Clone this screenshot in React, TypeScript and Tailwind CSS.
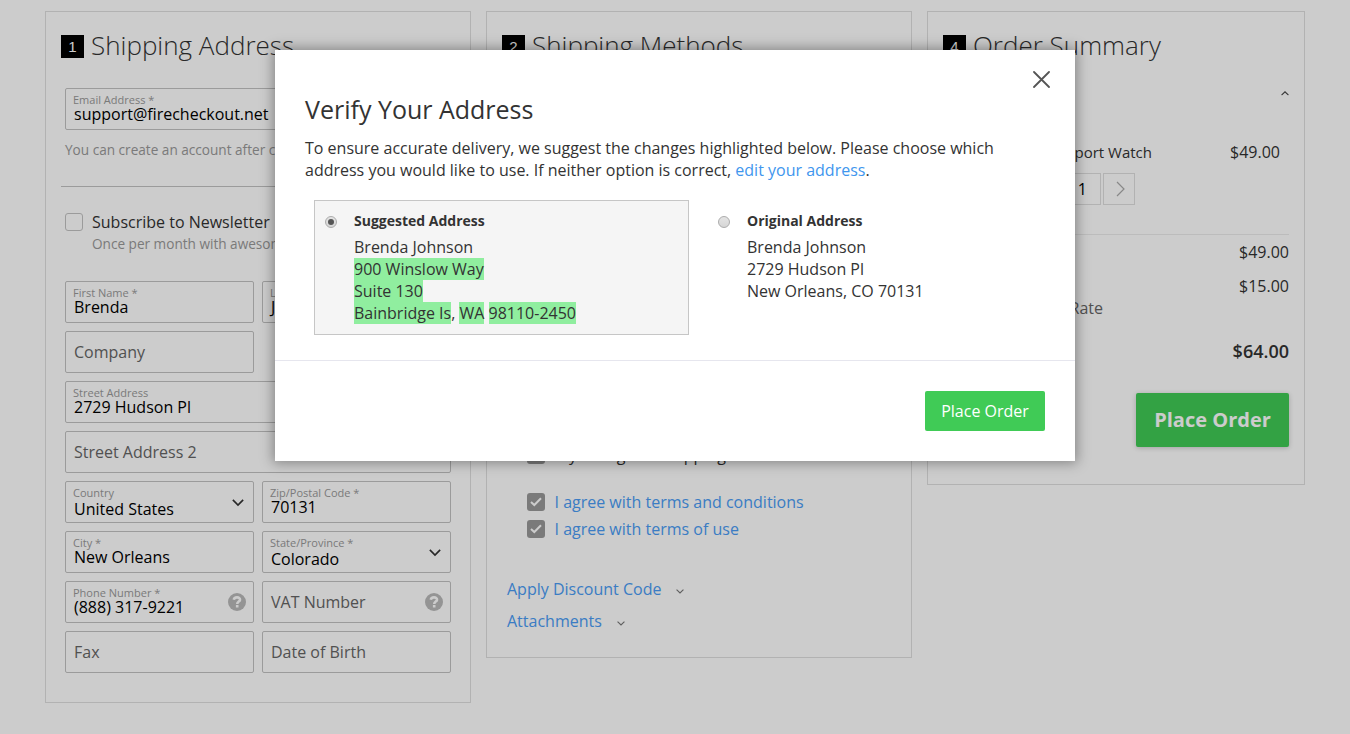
import React from "react";

function Badge({ n }: { n: string }) {
  return (
    <span className="flex h-[23px] w-[23px] items-center justify-center bg-black font-['Liberation_Sans'] text-[15px] leading-none text-white">
      {n}
    </span>
  );
}

function Title({ n, children }: { n: string; children: React.ReactNode }) {
  return (
    <div className="mb-px flex h-[36px] items-center gap-[7px] whitespace-nowrap">
      <Badge n={n} />
      <h2 className="-mt-[2px] text-[26px] leading-[36px] font-light text-[#333]">{children}</h2>
    </div>
  );
}

type DownProps = { w: number; stroke: string; weight?: number; className?: string };

function Down({ w, stroke, weight = 1.4, className = "" }: DownProps) {
  return (
    <svg width={w} height={w * 0.6} viewBox="0 0 10 6" fill="none" className={className}>
      <path d="M0.7 0.8 L5 5 L9.3 0.8" stroke={stroke} strokeWidth={weight} />
    </svg>
  );
}

function Help() {
  return (
    <svg width="18" height="18" viewBox="0 0 18 18" fill="none">
      <circle cx="9" cy="9" r="9" fill="#bababa" />
      <path d="M5.8 6.8 C6.3 3.4 12.2 3.8 12 6.8 C11.9 8.6 9.2 8.6 9.2 11" stroke="#fff" strokeWidth="2.6" />
      <rect x="7.9" y="12" width="2.6" height="2.5" fill="#fff" />
    </svg>
  );
}

type FieldProps = {
  label?: string;
  value?: string;
  placeholder?: string;
  select?: boolean;
  help?: boolean;
  wide?: boolean;
};

function Field({ label, value, placeholder, select, help, wide }: FieldProps) {
  return (
    <div
      className={`flex h-[42px] items-center justify-between rounded-[2px] border border-[#c2c2c2] pl-[8px] ${
        wide ? "col-span-2" : "w-[189px]"
      } ${select ? "pr-[9px]" : "pr-[7px]"}`}
    >
      {placeholder ? (
        <span className="text-[16px] leading-[22px] text-[#666]">{placeholder}</span>
      ) : (
        <span className="flex flex-col self-start pt-[5px]">
          <span className="-ml-px text-[11px] leading-[11px] text-[#999]">{label}</span>
          <span className={`text-[16px] leading-[18px] text-black ${select ? "pt-[2px]" : ""}`}>{value}</span>
        </span>
      )}
      {select && <Down w={12} stroke="#333" weight={1.4} className="mt-[2px]" />}
      {help && <Help />}
    </div>
  );
}

function Agree({ children }: { children: React.ReactNode }) {
  return (
    <div className="flex h-[27px] items-center gap-[9.5px]">
      <span className="flex h-[18px] w-[18px] items-center justify-center rounded-[3px] bg-[#999]">
        <svg width="12" height="10" viewBox="0 0 12 10" fill="none">
          <path d="M1 5 L4.3 8 L11 1.3" stroke="#fff" strokeWidth="2" />
        </svg>
      </span>
      {children}
    </div>
  );
}

function Radio({ on }: { on?: boolean }) {
  return (
    <span className="mt-[6px] flex h-[12px] w-[12px] shrink-0 items-center justify-center rounded-full border border-[#acacac] bg-linear-to-b from-[#e4e4e4] to-[#d6d6d6]">
      {on && <span className="h-[6px] w-[6px] rounded-full bg-[#555]" />}
    </span>
  );
}

function Mark({ children }: { children: React.ReactNode }) {
  return <span className="inline-block h-[22px] bg-[#90ee9f] leading-[22px]">{children}</span>;
}

function ShippingAddress() {
  return (
    <section className="h-[692px] w-[426px] shrink-0 border border-[#dfdfdf] px-[15px] pt-[16px]">
      <Title n="1">Shipping Address</Title>
      <div className="px-[4px] pt-[23px]">
        <Field label="Email Address *" value="support@firecheckout.net" wide />
        <p className="pt-[10px] text-[13.6px] leading-[20px] whitespace-nowrap text-[#999]">
          You can create an account after checkout.
        </p>
      </div>
      <hr className="mt-[26px] border-[#c2c2c2]" />
      <div className="flex gap-[9px] px-[4px] pt-[24px]">
        <span className="mt-[2px] h-[18px] w-[18px] rounded-[3px] border border-[#c2c2c2]" />
        <div>
          <p className="text-[16px] leading-[22px] text-[#333]">Subscribe to Newsletter</p>
          <p className="text-[13.6px] leading-[22px] text-[#999]">Once per month with awesome offers</p>
        </div>
      </div>
      <div className="grid grid-cols-[189px_189px] gap-[8px] px-[4px] pt-[26px]">
        <Field label="First Name *" value="Brenda" />
        <Field label="Last Name *" value="Johnson" />
        <Field placeholder="Company" />
        <span />
        <Field label="Street Address" value="2729 Hudson Pl" wide />
        <Field placeholder="Street Address 2" wide />
        <Field label="Country" value="United States" select />
        <Field label="Zip/Postal Code *" value="70131" />
        <Field label="City *" value="New Orleans" />
        <Field label="State/Province *" value="Colorado" select />
        <Field label="Phone Number *" value="(888) 317-9221" help />
        <Field placeholder="VAT Number" help />
        <Field placeholder="Fax" />
        <Field placeholder="Date of Birth" />
      </div>
    </section>
  );
}

function ShippingMethods() {
  return (
    <section className="flex h-[647px] w-[426px] shrink-0 flex-col border border-[#dfdfdf] px-[15px] pt-[16px]">
      <Title n="2">Shipping Methods</Title>
      <div className="mt-auto pb-[21px] text-[16px] leading-[22px] text-[#4a9cf5]">
        <div className="pl-[25px]">
          <Agree>
            <span className="text-[#333]">My billing and shipping</span>
          </Agree>
          <div className="pt-[20px]">
            <Agree>I agree with terms and conditions</Agree>
            <Agree>I agree with terms of use</Agree>
          </div>
        </div>
        <div className="flex items-center gap-[15px] pt-[36px] pl-[5px]">
          Apply Discount Code
          <Down w={8} stroke="#777" className="mt-[5px]" />
        </div>
        <div className="flex items-center gap-[15px] pt-[10px] pb-[4px] pl-[5px]">
          Attachments
          <Down w={8} stroke="#777" className="mt-[5px]" />
        </div>
      </div>
    </section>
  );
}

function OrderSummary() {
  return (
    <section className="h-[474px] w-[378px] shrink-0 border border-[#dfdfdf] px-[15px] pt-[16px] text-[16px] leading-[22px] text-[#333]">
      <Title n="4">Order Summary</Title>
      <div className="flex justify-end pt-[26px]">
        <Down w={8} stroke="#444" className="rotate-180" />
      </div>
      <div className="flex justify-between pt-[45px] pr-[9px]">
        <span className="w-[209px] text-right text-[15px] whitespace-nowrap">Sprite Sport Watch</span>
        <span>$49.00</span>
      </div>
      <div className="flex gap-[2px] pt-[10px] pl-[125px]">
        <span className="flex h-[32px] w-[33px] items-center justify-end border border-[#dfdfdf] pr-[13px] text-black">1</span>
        <span className="flex h-[32px] w-[32px] items-center justify-center border border-[#dfdfdf] pl-[2px]">
          <svg width="9" height="16" viewBox="0 0 9 16" fill="none">
            <path d="M1 1 L8 8 L1 15" stroke="#aaa" strokeWidth="1.2" />
          </svg>
        </span>
      </div>
      <div className="mt-[29px] ml-[5px] border-t border-[#ececec] pt-[6px]">
        <div className="flex justify-between">
          <span>Subtotal</span>
          <span>$49.00</span>
        </div>
        <div className="flex justify-between pt-[12px]">
          <span>Shipping</span>
          <span>$15.00</span>
        </div>
        <p className="w-[155px] text-right whitespace-nowrap text-[#666]">Fixed Rate</p>
        <div className="flex justify-between pt-[20px] text-[18px] leading-[24px] font-semibold">
          <span>Total</span>
          <span>$64.00</span>
        </div>
        <div className="flex justify-end pt-[30px]">
          <button className="h-[54px] w-[153px] rounded-[2px] bg-[#40cb56] text-[20px] font-bold text-white shadow-[0_1px_5px_rgba(0,0,0,0.2)]">
            Place Order
          </button>
        </div>
      </div>
    </section>
  );
}

function AddressModal() {
  return (
    <div className="flex h-[411px] w-[800px] flex-col bg-white text-[16px] leading-[22px] text-[#333] shadow-[0_0_12px_2px_rgba(0,0,0,0.35)]">
      <div className="flex justify-end pt-[21px] pr-[25px]">
        <svg width="17" height="17" viewBox="0 0 17 17" fill="none">
          <path d="M1 1 L16 16 M16 1 L1 16" stroke="#555" strokeWidth="1.8" strokeLinecap="round" />
        </svg>
      </div>
      <div className="px-[30px]">
        <h1 className="pt-[3px] text-[25px] leading-[36px]">Verify Your Address</h1>
        <p className="pt-[10px] whitespace-nowrap">
          To ensure accurate delivery, we suggest the changes highlighted below. Please choose which
          <br />
          address you would like to use. If neither option is correct, <a className="text-[#4096ee]">edit your address</a>.
        </p>
        <div className="flex pt-[19px] pl-[9px]">
          <div className="flex h-[135px] w-[375px] gap-[17px] border border-[#c6c6c6] bg-[#f5f5f5] px-[10px] pt-[9px]">
            <Radio on />
            <div>
              <p className="mb-[4px] text-[14px] leading-[22px] font-bold">Suggested Address</p>
              <p>Brenda Johnson</p>
              <p><Mark>900 Winslow Way</Mark></p>
              <p><Mark>Suite 130</Mark></p>
              <p><Mark>Bainbridge Is</Mark>, <Mark>WA</Mark> <Mark>98110-2450</Mark></p>
            </div>
          </div>
          <div className="flex gap-[17px] pt-[10px] pl-[29px]">
            <Radio />
            <div>
              <p className="mb-[4px] text-[14px] leading-[22px] font-bold">Original Address</p>
              <p>Brenda Johnson</p>
              <p>2729 Hudson Pl</p>
              <p>New Orleans, CO 70131</p>
            </div>
          </div>
        </div>
      </div>
      <div className="mt-auto flex h-[101px] justify-end border-t border-[#e6e6ee] pt-[30px] pr-[30px]">
        <button className="h-[40px] w-[120px] rounded-[2px] bg-[#40cb56] text-[16px] text-white">Place Order</button>
      </div>
    </div>
  );
}

export default function App() {
  return (
    <div className="relative h-[734px] w-[1350px] overflow-hidden bg-white font-['Open_Sans',sans-serif]">
      <main className="flex items-start gap-[15px] pt-[11px] pl-[45px]">
        <ShippingAddress />
        <ShippingMethods />
        <OrderSummary />
      </main>
      <div className="absolute inset-0 flex items-start justify-center bg-black/20 pt-[50px]">
        <AddressModal />
      </div>
    </div>
  );
}
